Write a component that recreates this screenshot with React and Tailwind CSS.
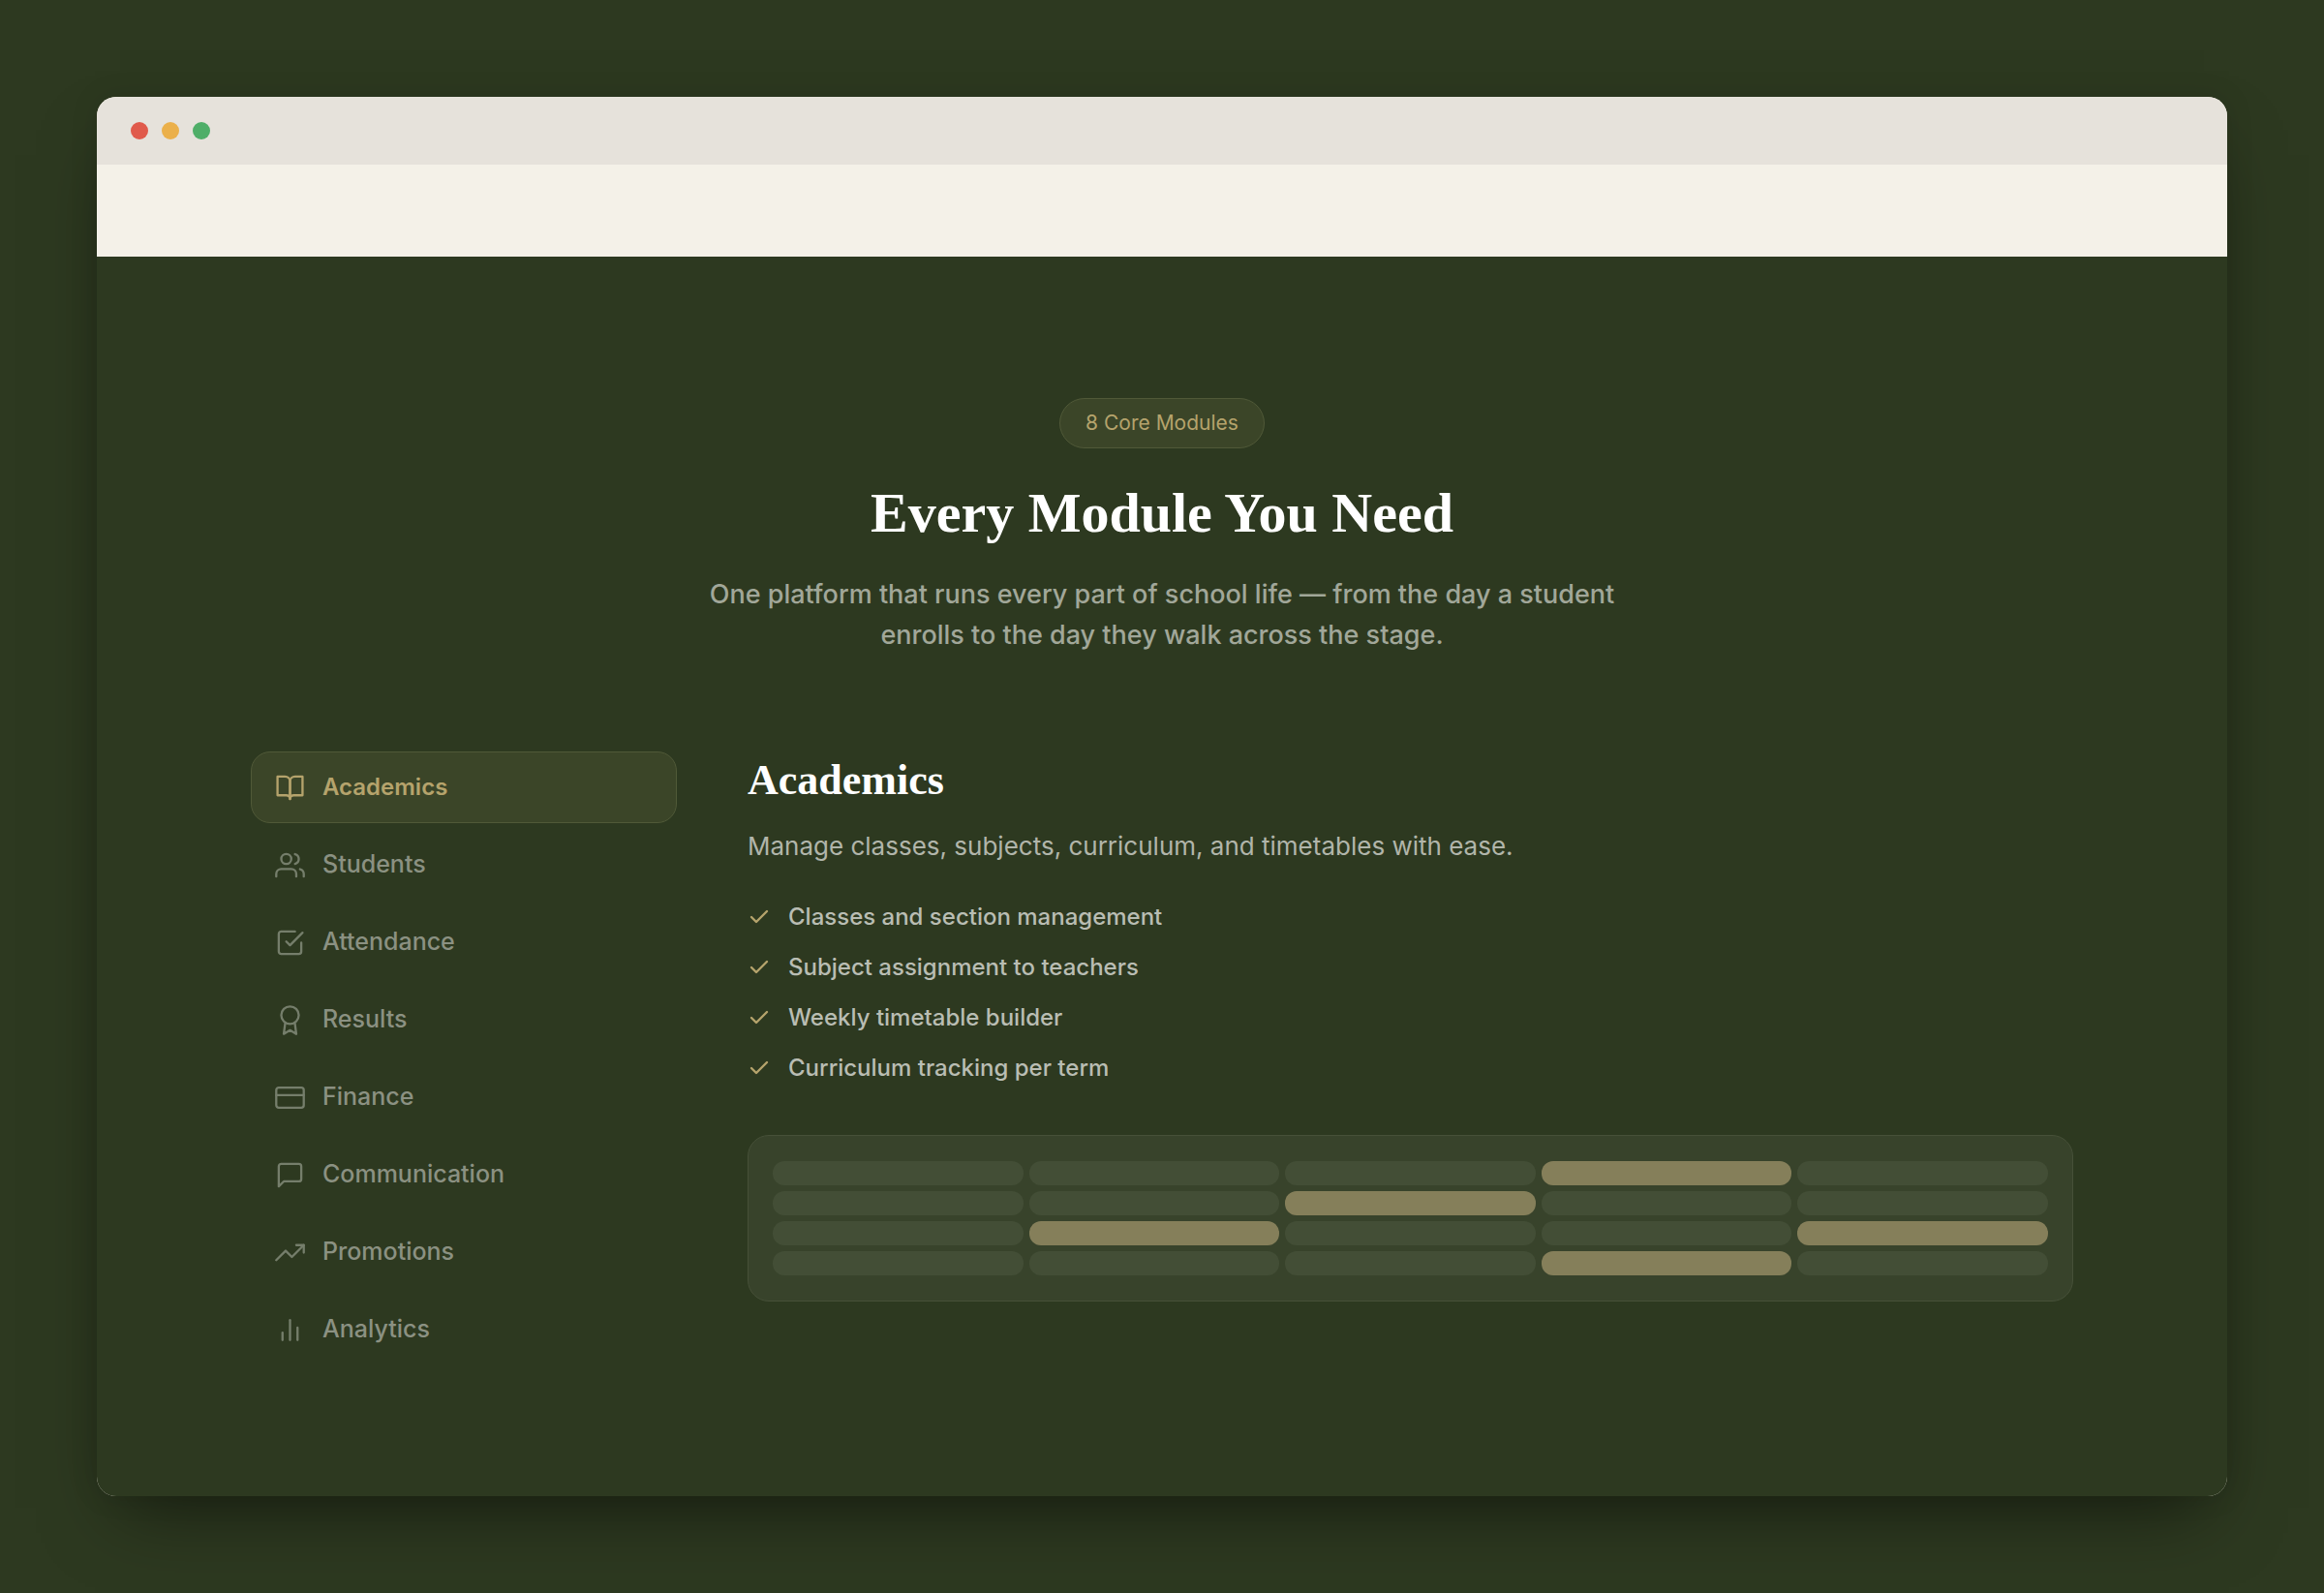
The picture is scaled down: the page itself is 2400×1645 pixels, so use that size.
import React, { useState } from 'react';
import {
    FiBookOpen,
    FiUsers,
    FiCheckSquare,
    FiAward,
    FiCreditCard,
    FiMessageSquare,
    FiTrendingUp,
    FiBarChart2,
    FiCheck,
} from 'react-icons/fi';

const modules = [
    { name: 'Academics', icon: FiBookOpen },
    { name: 'Students', icon: FiUsers },
    { name: 'Attendance', icon: FiCheckSquare },
    { name: 'Results', icon: FiAward },
    { name: 'Finance', icon: FiCreditCard },
    { name: 'Communication', icon: FiMessageSquare },
    { name: 'Promotions', icon: FiTrendingUp },
    { name: 'Analytics', icon: FiBarChart2 },
];

const features = [
    'Classes and section management',
    'Subject assignment to teachers',
    'Weekly timetable builder',
    'Curriculum tracking per term',
];

// 1 = booked slot in the timetable
const timetable = [
    [0, 0, 0, 1, 0],
    [0, 0, 1, 0, 0],
    [0, 1, 0, 0, 1],
    [0, 0, 0, 1, 0],
];

function ModuleTab({ name, icon: Icon, active, onClick }) {
    return (
        <button
            type="button"
            onClick={onClick}
            className={`flex h-[74px] w-full items-center gap-[18px] rounded-[20px] border px-6 text-left ${
                active
                    ? 'border-[#505938] bg-[#3b4528] text-[24px] font-semibold text-[#b5a36c]'
                    : 'border-transparent text-[25px] font-medium text-[#8b9182]'
            }`}
        >
            <Icon className={`size-[31px] shrink-0 stroke-[1.8] ${active ? '' : 'text-[#757e6b]'}`} />
            {name}
        </button>
    );
}

export default function App() {
    const [current, setCurrent] = useState('Academics');

    return (
        <div className="min-h-screen bg-[#2d3920] p-[100px] font-['Inter',sans-serif]">
            <div className="overflow-hidden rounded-[20px] bg-[#f4f1e8] shadow-[0_36px_72px_-24px_rgba(0,0,0,0.5),0_0_30px_rgba(0,0,0,0.1)]">
                {/* Window bar */}
                <div className="flex h-[70px] items-center gap-[14px] bg-[#e6e2db] px-[35px]">
                    <span className="size-[18px] rounded-full bg-[#e05a4b]" />
                    <span className="size-[18px] rounded-full bg-[#ebb04a]" />
                    <span className="size-[18px] rounded-full bg-[#4fae68]" />
                </div>

                {/* Empty header */}
                <div className="h-[95px] bg-[#f4f1e8]" />

                <main className="bg-[#2d3920] px-[159px] pt-[146px] pb-[135px]">
                    <header className="flex flex-col items-center text-center">
                        <span className="flex h-[52px] items-center rounded-full border border-[#505938] bg-[#3b4528] px-[26px] text-[21px] text-[#b5a36c]">
                            8 Core Modules
                        </span>
                        <h1 className="mt-[32px] font-['Liberation_Serif',serif] text-[58px] leading-[70px] font-bold text-white">
                            Every Module You Need
                        </h1>
                        <p className="mt-[28px] max-w-[1000px] text-[27px] leading-[42px] font-medium text-[#a1a799]">
                            One platform that runs every part of school life — from the day a student enrolls to the day they walk across the stage.
                        </p>
                    </header>

                    <div className="mt-[99px] flex gap-[73px]">
                        <nav className="flex w-[440px] shrink-0 flex-col gap-[6px]">
                            {modules.map((m) => (
                                <ModuleTab
                                    key={m.name}
                                    name={m.name}
                                    icon={m.icon}
                                    active={m.name === current}
                                    onClick={() => setCurrent(m.name)}
                                />
                            ))}
                        </nav>

                        <section className="min-w-0 flex-1">
                            <h2 className="mt-[6px] font-['Liberation_Serif',serif] text-[44px] leading-[48px] font-bold text-white">
                                Academics
                            </h2>
                            <p className="mt-[24px] text-[26px] leading-[40px] text-[#b1b5aa]">
                                Manage classes, subjects, curriculum, and timetables with ease.
                            </p>
                            <ul className="mt-[36px] flex flex-col gap-[18px]">
                                {features.map((f) => (
                                    <li key={f} className="flex items-center gap-[18px] text-[24px] leading-[34px] font-medium text-[#b9bdb3]">
                                        <FiCheck className="size-[24px] shrink-0 stroke-[2.4] text-[#b5a36c]" />
                                        {f}
                                    </li>
                                ))}
                            </ul>

                            {/* Timetable preview */}
                            <div className="mt-[52px] grid grid-cols-5 gap-[6px] rounded-[22px] border border-[#465038] bg-[#38432b] px-[25px] py-[26px]">
                                {timetable.flat().map((booked, i) => (
                                    <div
                                        key={i}
                                        className={`h-[25px] rounded-[12px] ${booked ? 'bg-[#857f5a]' : 'bg-[#434e36]'}`}
                                    />
                                ))}
                            </div>
                        </section>
                    </div>
                </main>
            </div>
        </div>
    );
}
